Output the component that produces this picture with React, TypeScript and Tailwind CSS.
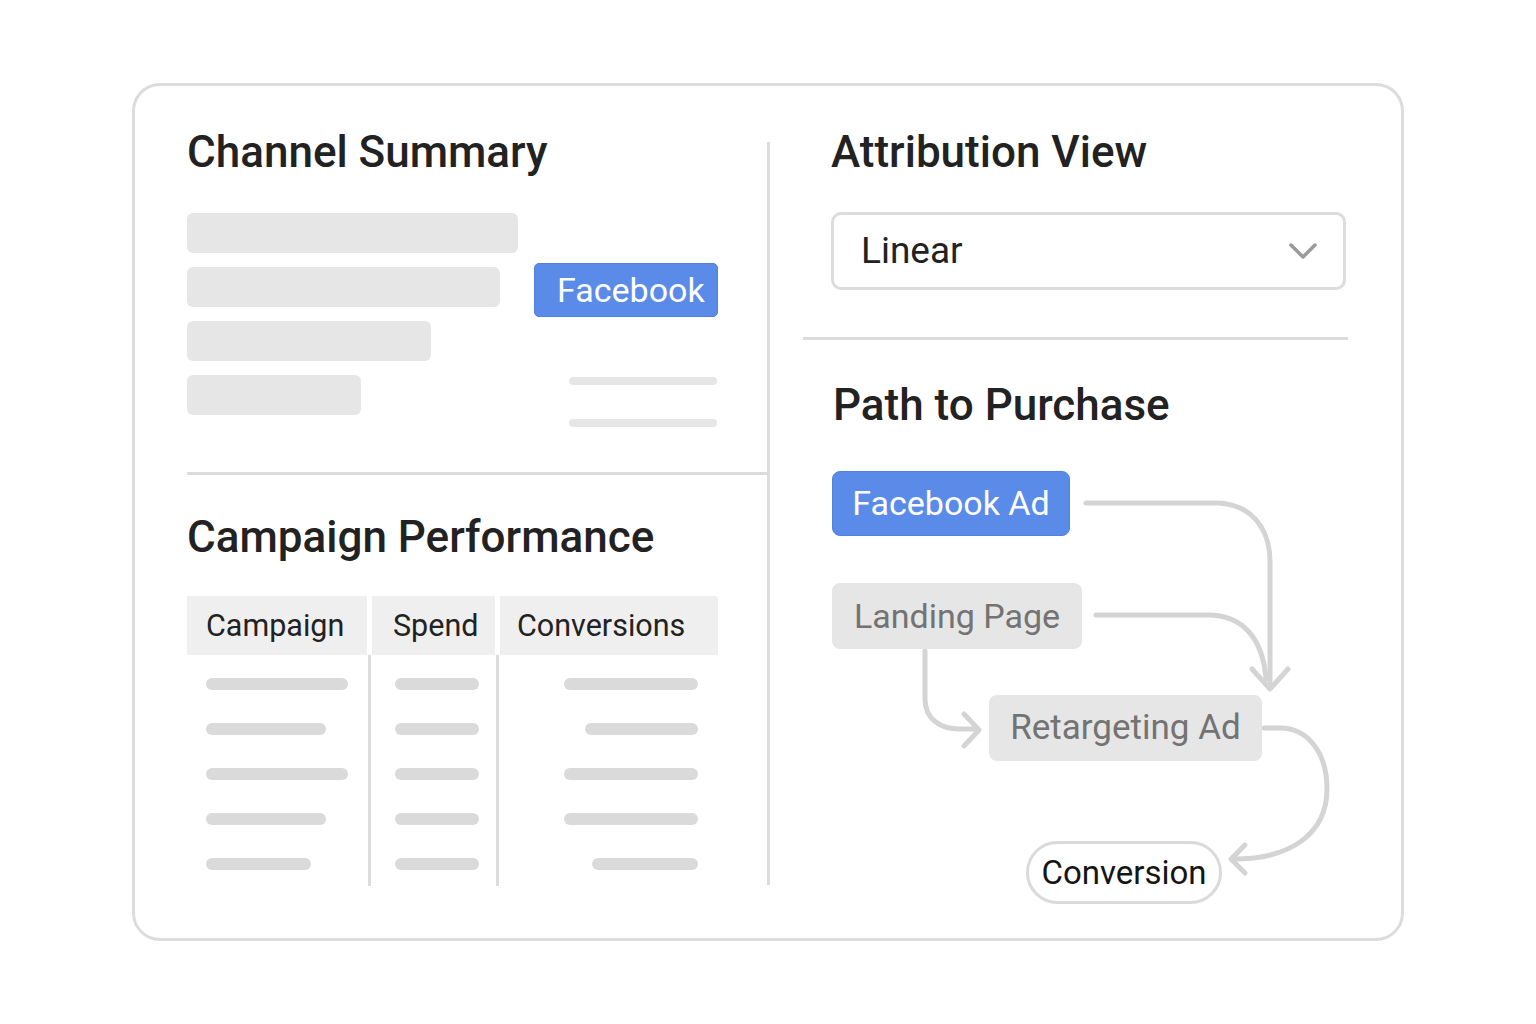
const font = { fontFamily: 'Roboto, "Noto Sans", sans-serif' };

const campaignBars = [142, 120, 142, 120, 105];
const conversionBars = [134, 113, 134, 134, 106];

function SummaryBars() {
  return (
    <div className="flex flex-col gap-[14px] w-[331px]">
      {[331, 313, 244, 174].map((w, i) => (
        <div key={i} className="h-[40px] rounded-[6px] bg-[#e6e6e6]" style={{ width: w }} />
      ))}
    </div>
  );
}

function CampaignTable() {
  return (
    <div className="mt-[37px] w-[531px]">
      <div className="flex h-[59px] gap-[5px] text-[30.5px] text-[#222]">
        <div className="w-[180px] bg-[#efefef] flex items-center pl-[19px]">Campaign</div>
        <div className="w-[123px] bg-[#efefef] flex items-center pl-[21px]">Spend</div>
        <div className="w-[218px] bg-[#efefef] flex items-center pl-[17px] rounded-tr-[4px]">Conversions</div>
      </div>
      <div className="flex h-[231px]">
        <div className="w-[180px] flex flex-col gap-[33px] pt-[23px] pl-[19px]">
          {campaignBars.map((w, i) => (
            <div key={i} className="h-[12px] rounded-full bg-[#dadada]" style={{ width: w }} />
          ))}
        </div>
        <div className="w-[5px] flex justify-center">
          <div className="w-[3px] h-full bg-[#dcdcdc]" />
        </div>
        <div className="w-[123px] flex flex-col gap-[33px] pt-[23px] pl-[23px]">
          {campaignBars.map((_, i) => (
            <div key={i} className="h-[12px] w-[84px] rounded-full bg-[#dadada]" />
          ))}
        </div>
        <div className="w-[5px] flex justify-center">
          <div className="w-[3px] h-full bg-[#dcdcdc]" />
        </div>
        <div className="w-[218px] flex flex-col items-end gap-[33px] pt-[23px] pr-[20px]">
          {conversionBars.map((w, i) => (
            <div key={i} className="h-[12px] rounded-full bg-[#dadada]" style={{ width: w }} />
          ))}
        </div>
      </div>
    </div>
  );
}

function PathDiagram() {
  return (
    <div className="relative h-[480px]">
      <svg className="absolute left-0 top-0" width="600" height="500" fill="none" stroke="#d4d4d4" strokeWidth="5" strokeLinecap="round" strokeLinejoin="round">
        <path d="M283 76 H412 C447 76 467 100 467 135 V259" />
        <path d="M449 242 L467 262 L485 242" />
        <path d="M293 188 H405 C440 188 460 212 463 252" />
        <path d="M122 224 V272 C122 292 137 302 157 302 H174" />
        <path d="M161 287 L176 303 L161 319" />
        <path d="M461 301 H477 C505 301 524 326 524 362 C524 405 490 432 431 432" />
        <path d="M442 418 L428 432 L442 446" />
      </svg>
      <div className="absolute left-[29px] top-[44px] w-[238px] h-[65px] rounded-[8px] bg-[#5b8be8] border border-[#4f80e2] text-white text-[34px] flex items-center justify-center">
        Facebook Ad
      </div>
      <div className="absolute left-[29px] top-[156px] w-[250px] h-[66px] rounded-[8px] bg-[#e6e6e6] text-[#737373] text-[34px] flex items-center justify-center">
        Landing Page
      </div>
      <div className="absolute left-[186px] top-[268px] w-[273px] h-[66px] rounded-[8px] bg-[#e6e6e6] text-[#737373] text-[35px] flex items-center justify-center">
        Retargeting Ad
      </div>
      <div className="absolute left-[223px] top-[414px] w-[196px] h-[63px] rounded-full bg-white border-[3px] border-[#dadada] text-[#151515] text-[33px] flex items-center justify-center">
        Conversion
      </div>
    </div>
  );
}

export default function App() {
  return (
    <div className="min-h-screen bg-white pt-[83px]" style={font}>
      <div className="mx-auto w-[1272px] h-[858px] border-[3px] border-[#dcdcdc] rounded-[28px] flex">
        {/* left column */}
        <div className="w-[632px] pl-[52px] flex flex-col">
          <h2 className="mt-[44px] text-[44px] leading-none font-medium text-[#222]">Channel Summary</h2>
          <div className="mt-[39px] flex">
            <SummaryBars />
            <div className="ml-[16px] w-[184px] flex flex-col">
              <div className="mt-[50px] h-[54px] rounded-[5px] bg-[#5b8be8] border border-[#4f80e2] text-white text-[34px] flex items-center pl-[22px]">
                Facebook
              </div>
              <div className="ml-[35px] mt-[60px] w-[148px] h-[8px] rounded-full bg-[#e6e6e6]" />
              <div className="ml-[35px] mt-[34px] w-[148px] h-[8px] rounded-full bg-[#e6e6e6]" />
            </div>
          </div>
          <div className="mt-[45px] h-[3px] bg-[#dcdcdc]" />
          <h2 className="mt-[40px] text-[44px] leading-none font-medium text-[#222]">Campaign Performance</h2>
          <CampaignTable />
        </div>

        {/* vertical divider */}
        <div className="mt-[56px] w-[3px] h-[743px] bg-[#dcdcdc]" />

        {/* right column */}
        <div className="flex-1 pl-[33px] pr-[53px] flex flex-col">
          <h2 className="ml-[28px] mt-[44px] text-[44px] leading-none font-medium text-[#222]">Attribution View</h2>
          <div className="ml-[28px] mr-[2px] mt-[38px] h-[78px] border-[3px] border-[#dcdcdc] rounded-[10px] flex items-center justify-between pl-[27px] pr-[25px]">
            <span className="text-[37px] text-[#222]">Linear</span>
            <svg width="30" height="20" viewBox="0 0 30 20" fill="none" stroke="#9a9a9a" strokeWidth="3.5" strokeLinecap="round" strokeLinejoin="round">
              <path d="M3 4 L15 16 L27 4" />
            </svg>
          </div>
          <div className="mt-[47px] h-[3px] bg-[#dcdcdc]" />
          <h2 className="ml-[30px] mt-[43px] text-[44px] leading-none font-medium text-[#222]">Path to Purchase</h2>
          <PathDiagram />
        </div>
      </div>
    </div>
  );
}
